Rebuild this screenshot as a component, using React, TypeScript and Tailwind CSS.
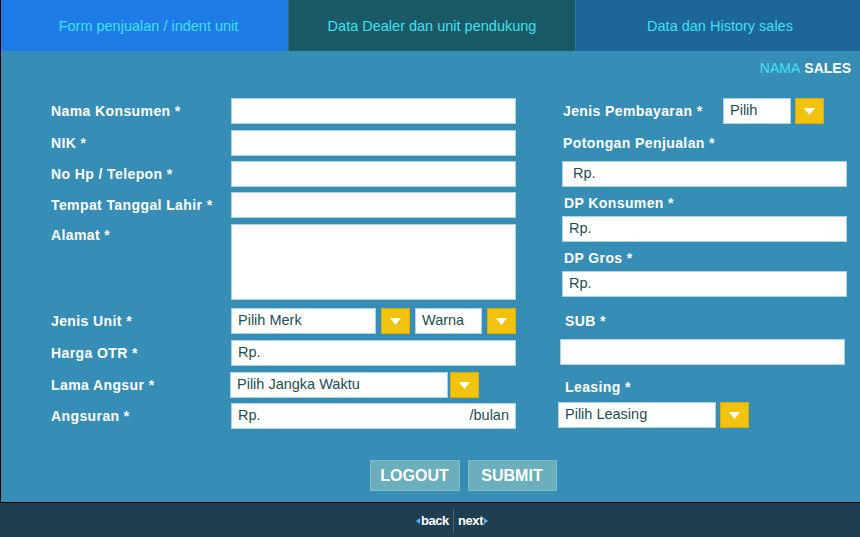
const Caret = () => (
  <svg width="11" height="7" viewBox="0 0 11 7">
    <path d="M0 0h11L5.5 7z" fill="#ffffff" />
  </svg>
);

const DropBtn = ({ className = "" }: { className?: string }) => (
  <div className={`flex h-[26px] w-[29px] shrink-0 items-center justify-center border border-[#d8ad0a] bg-[#f1c30e] ${className}`}>
    <Caret />
  </div>
);

const Field = ({ w = "w-[285px]", text = "", right = "", className = "" }: { w?: string; text?: string; right?: string; className?: string }) => (
  <div className={`flex h-[26px] shrink-0 items-center justify-between border border-[#a9d3e6] bg-white px-[6px] text-[14.5px] text-[#1d4d55] ${w} ${className}`}>
    <span>{text}</span>
    {right && <span>{right}</span>}
  </div>
);

const Label = ({ children, className = "" }: { children: React.ReactNode; className?: string }) => (
  <div className={`text-[14px] font-bold leading-[18px] tracking-[0.4px] text-white ${className}`}>{children}</div>
);

const Row = ({ label, children, className = "" }: { label: string; children: React.ReactNode; className?: string }) => (
  <div className={`flex items-center ${className}`}>
    <Label className="w-[180px]">{label}</Label>
    <div className="flex items-center">{children}</div>
  </div>
);

export default function App() {
  return (
    <div className="flex h-[537px] w-[860px] flex-col overflow-hidden font-['Liberation_Sans',Arial,sans-serif]">
      {/* tabs */}
      <div className="flex h-[51px] border-l border-black text-[14.5px] text-[#3fe0f0]">
        <div className="flex w-[287px] items-center justify-center bg-[#1f7be6] pl-[8px] pt-[2px]">Form penjualan / indent unit</div>
        <div className="flex w-[287px] items-center justify-center border-l border-[#2c6f80] bg-[#195a66] pt-[2px]">Data Dealer dan unit pendukung</div>
        <div className="flex flex-1 items-center justify-center border-l border-[#2c79a8] bg-[#1c6699] pl-[4px] pt-[2px]">Data dan History sales</div>
      </div>

      {/* main panel */}
      <div className="flex h-[452px] flex-col border-b border-l border-black bg-[#368eb7]">
        <div className="flex justify-end pr-[9px] pt-[9px] text-[14px] leading-[16px]">
          <span className="text-[#42e2f0]">NAMA</span>
          <span className="ml-[4px] font-bold text-white">SALES</span>
        </div>

        <div className="mt-[22px] flex">
          {/* left column */}
          <div className="ml-[50px] flex w-[466px] flex-col">
            <Row label="Nama Konsumen *"><Field /></Row>
            <Row label="NIK *" className="mt-[6px]"><Field /></Row>
            <Row label="No Hp / Telepon *" className="mt-[5px]"><Field /></Row>
            <Row label="Tempat Tanggal Lahir *" className="mt-[5px]"><Field /></Row>
            <div className="mt-[6px] flex items-start">
              <Label className="w-[180px] pt-[2px]">Alamat *</Label>
              <div className="h-[76px] w-[285px] border border-[#a9d3e6] bg-white" />
            </div>
            <Row label="Jenis Unit *" className="mt-[8px]">
              <Field w="w-[145px]" text="Pilih Merk" />
              <DropBtn className="ml-[5px]" />
              <Field w="w-[67px]" text="Warna" className="ml-[5px]" />
              <DropBtn className="ml-[5px]" />
            </Row>
            <Row label="Harga OTR *" className="mt-[6px]"><Field text="Rp." /></Row>
            <Row label="Lama Angsur *" className="mt-[6px]">
              <Field w="w-[218px]" text="Pilih Jangka Waktu" className="-ml-[1px]" />
              <DropBtn className="ml-[2px]" />
            </Row>
            <Row label="Angsuran *" className="mt-[5px]"><Field text="Rp." right="/bulan" /></Row>
          </div>

          {/* right column */}
          <div className="ml-[41px] flex w-[290px] flex-col">
            <div className="flex items-center">
              <Label className="ml-[5px] w-[160px]">Jenis Pembayaran *</Label>
              <Field w="w-[68px]" text="Pilih" />
              <DropBtn className="ml-[4px]" />
            </div>
            <Label className="ml-[5px] mt-[10px]">Potongan Penjualan *</Label>
            <Field text="Rp." className="ml-[4px] mt-[9px] pl-[10px]" />
            <Label className="ml-[6px] mt-[7px]">DP Konsumen *</Label>
            <Field text="Rp." className="ml-[4px] mt-[4px]" />
            <Label className="ml-[6px] mt-[7px]">DP Gros *</Label>
            <Field text="Rp." className="ml-[4px] mt-[4px]" />
            <Label className="ml-[7px] mt-[15px]">SUB *</Label>
            <Field className="ml-[2px] mt-[9px]" />
            <Label className="ml-[7px] mt-[13px]">Leasing *</Label>
            <div className="mt-[6px] flex items-center">
              <Field w="w-[158px]" text="Pilih Leasing" />
              <DropBtn className="ml-[4px]" />
            </div>
          </div>
        </div>

        <div className="mt-[31px] flex justify-center pl-[65px]">
          <div className="flex h-[31px] w-[90px] items-center justify-center border border-[#7dbcc8] bg-[#6aafbb] text-[16px] font-bold text-white">LOGOUT</div>
          <div className="ml-[8px] flex h-[31px] w-[89px] items-center justify-center border border-[#7dbcc8] bg-[#6aafbb] text-[16px] font-bold text-white">SUBMIT</div>
        </div>
      </div>

      {/* footer */}
      <div className="flex flex-1 items-center justify-center bg-[#1f3e51] pl-[44px] pt-[2px] text-[13px] font-bold text-white">
        <div className="flex items-center">
          <svg width="4" height="6" viewBox="0 0 4 6" className="mr-[1px]"><path d="M4 0v6L0 3z" fill="#5bb8f0" /></svg>
          <span className="tracking-[-0.4px]">back</span>
          <span className="mx-[4px] h-[24px] w-px bg-[#4a6575]" />
          <span className="tracking-[-0.4px]">next</span>
          <svg width="4" height="6" viewBox="0 0 4 6" className="ml-[1px]"><path d="M0 0v6l4-3z" fill="#5bb8f0" /></svg>
        </div>
      </div>
    </div>
  );
}
